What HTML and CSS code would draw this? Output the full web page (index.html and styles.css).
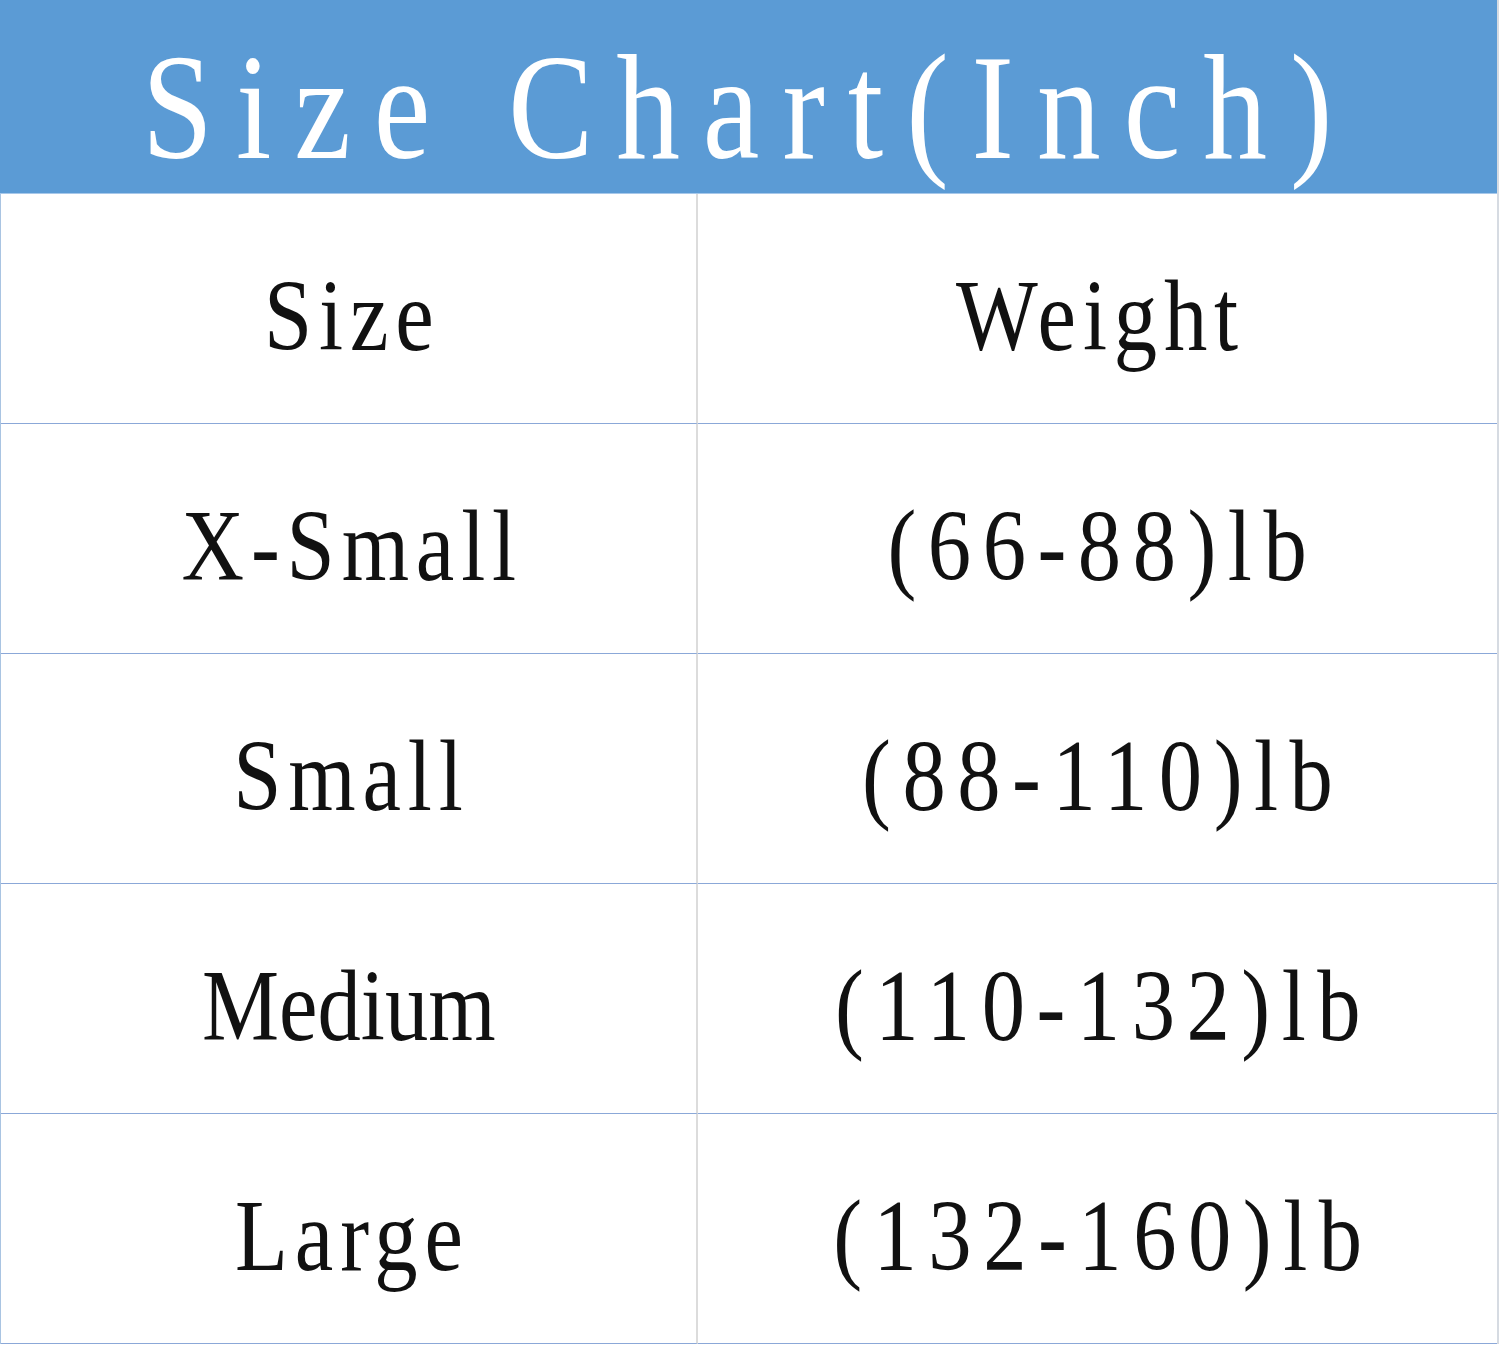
FILE: index.html
```html
<!DOCTYPE html>
<html lang="en">
<head>
<meta charset="utf-8">
<title>Size Chart (Inch)</title>
<link rel="stylesheet" href="styles.css">
</head>
<body>
<main class="chart">
  <header class="title"><h1 class="title-text">Size Chart(Inch)</h1></header>
  <div class="grid">
    <div class="cell cell-left"><span class="label">Size</span></div>
    <div class="cell"><span class="label">Weight</span></div>
    <div class="cell cell-left"><span class="label">X-Small</span></div>
    <div class="cell"><span class="label num">(66-88)lb</span></div>
    <div class="cell cell-left"><span class="label">Small</span></div>
    <div class="cell"><span class="label num">(88-110)lb</span></div>
    <div class="cell cell-left"><span class="label tight">Medium</span></div>
    <div class="cell"><span class="label num">(110-132)lb</span></div>
    <div class="cell cell-left"><span class="label">Large</span></div>
    <div class="cell"><span class="label num">(132-160)lb</span></div>
  </div>
</main>
</body>
</html>
```
FILE: styles.css
```css
html, body {
  margin: 0;
  padding: 0;
  background: #ffffff;
}

.chart {
  width: 1497px;
  border-right: 2px solid #d6dbe2;
  box-sizing: content-box;
}

.title {
  height: 193px;
  background: #5b9bd5;
  border-bottom: 1px solid #a7c8ea;
  display: flex;
  justify-content: center;
  align-items: flex-start;
  padding-right: 22px;
  box-sizing: content-box;
}

.title-text {
  margin: 32px 0 0 0;
  font-family: "Liberation Serif", "Times New Roman", serif;
  font-weight: normal;
  font-size: 150px;
  line-height: 1;
  color: #ffffff;
  letter-spacing: 27px;
  padding-left: 27px;
  display: inline-block;
  transform: scaleX(0.85);
  transform-origin: center;
  white-space: nowrap;
}

.grid {
  display: grid;
  grid-template-columns: 697px 1fr;
  border-left: 1px solid #a9c4e2;
}

.cell {
  height: 158px;
  padding-top: 71px;
  border-bottom: 1px solid #8ba8d8;
  display: flex;
  justify-content: center;
  align-items: flex-start;
  box-sizing: content-box;
}

.cell-left {
  border-right: 2px solid #dcdcdc;
}

.label {
  display: inline-block;
  font-family: "Liberation Serif", "Times New Roman", serif;
  font-size: 102px;
  line-height: 1;
  color: #111111;
  letter-spacing: 8px;
  padding-left: 8px;
  transform: scaleX(0.85);
  transform-origin: center;
  white-space: nowrap;
}

.label.num {
  letter-spacing: 13.5px;
  padding-left: 13.5px;
}

.label.tight {
  letter-spacing: 0;
  padding-left: 0;
}
```
